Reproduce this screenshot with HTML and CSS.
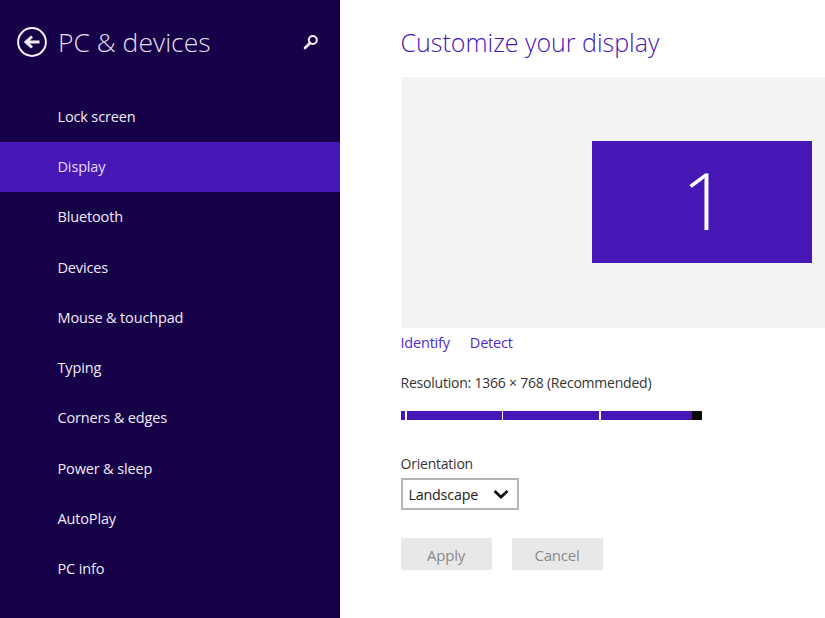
FILE: index.html
```html
<!DOCTYPE html>
<html lang="en">
<head>
<meta charset="utf-8">
<title>PC &amp; devices</title>
<link rel="stylesheet" href="styles.css">
</head>
<body>
<div class="app">
  <nav class="sidebar">
    <header class="side-head">
      <svg class="back" width="30" height="30" viewBox="0 0 30 30" aria-hidden="true">
        <circle cx="15" cy="15" r="13.9" fill="none" stroke="#f4f0fa" stroke-width="2"/>
        <path d="M22.5 15H10M15 9.5L9 15l6 5.5" fill="none" stroke="#f4f0fa" stroke-width="3"/>
      </svg>
      <h2 class="side-title">PC &amp; devices</h2>
      <svg class="search" width="16" height="16" viewBox="0 0 16 16" aria-hidden="true">
        <circle cx="9.8" cy="6" r="4" fill="none" stroke="#f4f0fa" stroke-width="2"/>
        <path d="M7 9L2 14" fill="none" stroke="#f4f0fa" stroke-width="2.6" stroke-linecap="round"/>
      </svg>
    </header>
    <ul class="menu">
      <li class="item">Lock screen</li>
      <li class="item active">Display</li>
      <li class="item">Bluetooth</li>
      <li class="item">Devices</li>
      <li class="item">Mouse &amp; touchpad</li>
      <li class="item">Typing</li>
      <li class="item">Corners &amp; edges</li>
      <li class="item">Power &amp; sleep</li>
      <li class="item">AutoPlay</li>
      <li class="item">PC info</li>
    </ul>
  </nav>
  <main class="content">
    <h1 class="title">Customize your display</h1>
    <section class="preview">
      <div class="monitor"><span class="digit">1</span></div>
    </section>
    <div class="links"><a class="link">Identify</a><a class="link">Detect</a></div>
    <p class="label res">Resolution: 1366 × 768 (Recommended)</p>
    <div class="slider">
      <span class="seg first"></span><span class="seg s1"></span><span class="seg s2"></span><span class="seg s3"></span><span class="thumb"></span>
    </div>
    <p class="label orient">Orientation</p>
    <div class="select">
      <span>Landscape</span>
      <svg width="16" height="10" viewBox="0 0 16 10" aria-hidden="true"><path d="M1.5 2L8 8l6.5-6" fill="none" stroke="#111" stroke-width="2.8"/></svg>
    </div>
    <div class="buttons">
      <button class="btn">Apply</button>
      <button class="btn">Cancel</button>
    </div>
  </main>
</div>
</body>
</html>
```
FILE: styles.css
```css
* { box-sizing: border-box; }
html, body { margin: 0; height: 100%; overflow: hidden; }
body { font-family: "Open Sans", "Noto Sans", sans-serif; background: #fff; }
.app { display: flex; width: 825px; height: 618px; }

.sidebar { width: 340px; flex: none; background: #160048; color: #f1ecf8; }
.side-head { display: flex; align-items: center; height: 84px; padding: 0 0 1px 17px; }
.back { flex: none; }
.side-title { margin: 0 0 0 11px; font-size: 26.5px; font-weight: 300; line-height: 82px; color: #e4def0; width: 245px; }
.search { flex: none; }
.menu { list-style: none; margin: 8px 0 0; padding: 0; }
.item { height: 50.25px; line-height: 49px; padding-left: 57.5px; font-size: 14.5px; letter-spacing: -0.15px; }
.active { height: 50px; background: #4617b4; color: #e6dcfa; }

.content { flex: 1; padding-left: 60.5px; min-width: 0; }
.title { margin: 0; height: 77px; line-height: 84px; font-size: 25px; font-weight: 300; color: #4617b4; }
.preview { height: 251px; background: #f3f3f3; padding: 64px 0 0 191.5px; }
.monitor { width: 220px; height: 122px; background: #4617b4; color: #fff; font-weight: 300; font-size: 80px; line-height: 116px; text-align: center; padding-left: 5px; }
.digit { display: inline-block; }
.links { display: flex; gap: 20px; margin-top: 4px; height: 22px; line-height: 22px; font-size: 14.5px; letter-spacing: -0.2px; color: #4f2cc4; }
.label { margin: 0; font-size: 14px; letter-spacing: -0.22px; color: #333; }
.res { margin-top: 19px; line-height: 20px; }
.slider { display: flex; gap: 1.5px; width: 301px; height: 9px; margin: 18px 0 0 0.5px; }
.seg { background: #4617b4; height: 9px; }
.first { width: 4px; }
.s1 { width: 95px; }
.s2 { width: 96px; }
.s3 { width: 91px; }
.thumb { width: 10px; margin-left: -1.5px; background: #0a0a0a; }
.orient { margin-top: 34px; line-height: 20px; }
.select { display: flex; align-items: center; justify-content: space-between; width: 118px; height: 32px; margin-top: 4px; padding: 0 8px 0 6px; border: 2px solid #b4b4b4; font-size: 14.3px; letter-spacing: -0.2px; color: #222; background: #fff; }
.buttons { display: flex; gap: 20px; margin-top: 28px; }
.btn { width: 91px; height: 32px; padding: 0 0 0; border: 0; background: #e8e8e8; color: #8a8a8a; font: inherit; font-size: 15px; line-height: 34px; letter-spacing: -0.2px; }
```
